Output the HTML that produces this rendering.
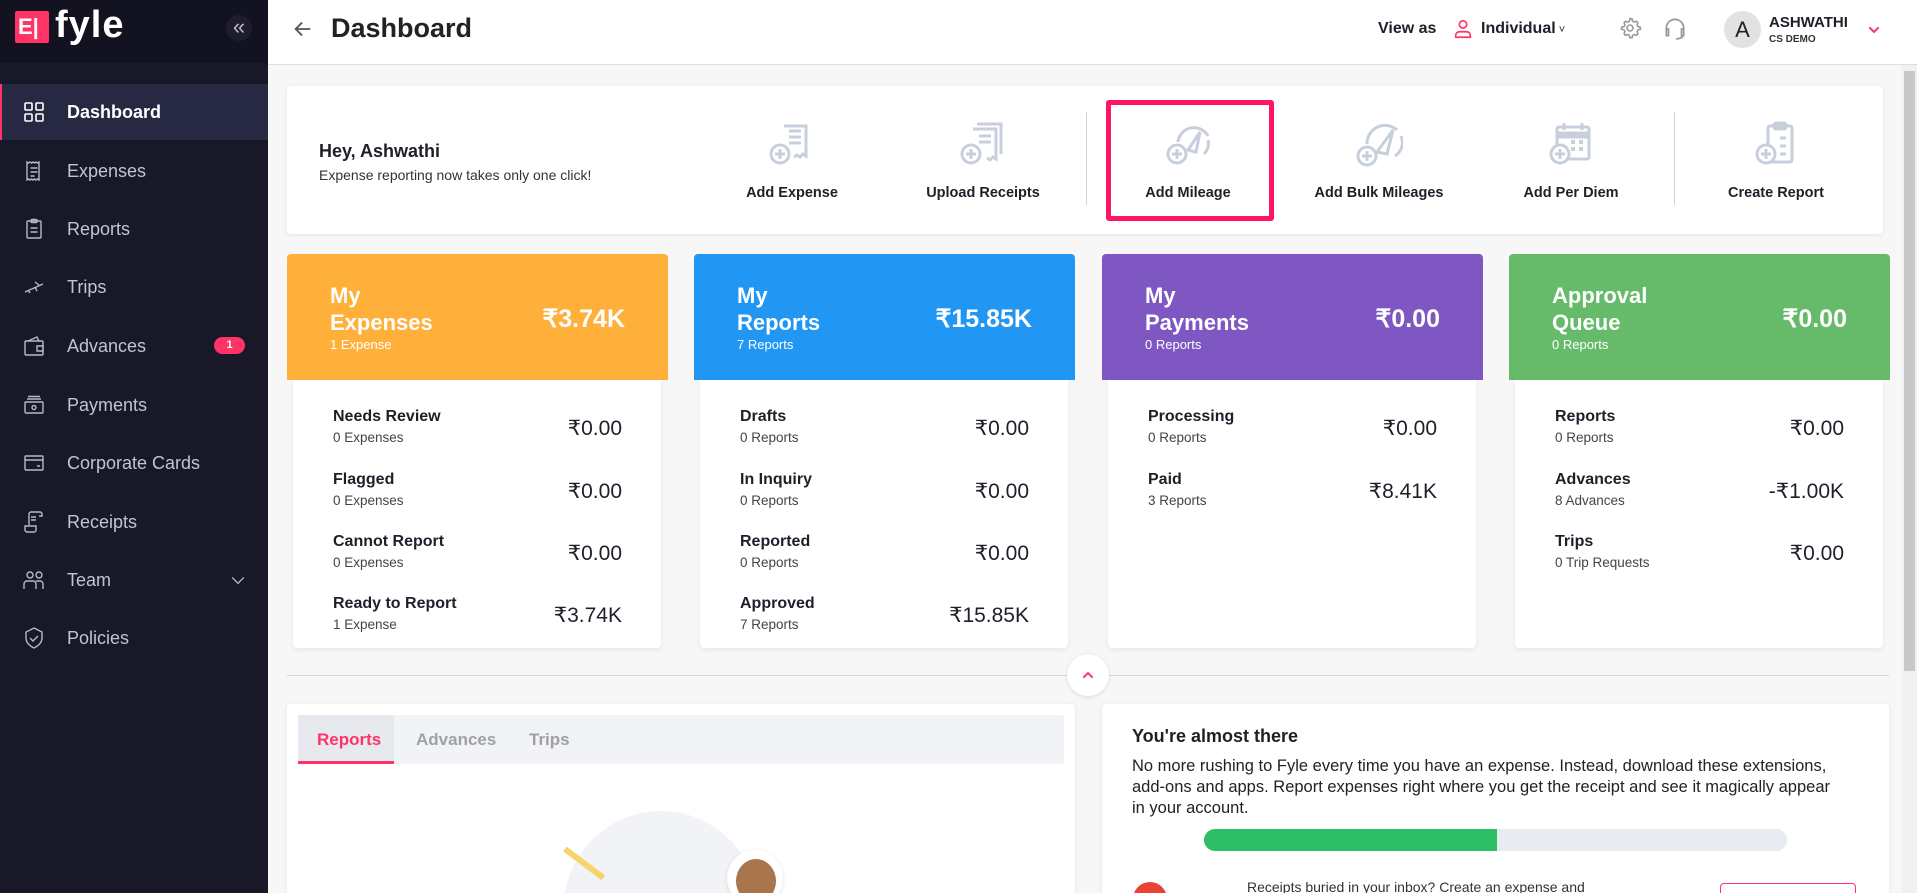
<!DOCTYPE html>
<html><head><meta charset="utf-8"><style>
*{box-sizing:border-box;margin:0;padding:0}
html,body{width:1917px;height:893px;overflow:hidden}
body{background:#f7f7f8;font-family:"Liberation Sans",sans-serif;position:relative;color:#1f1f2a}
.a{position:absolute}
#side{left:0;top:0;width:268px;height:893px;background:#181828}
#logo{left:0;top:0;width:268px;height:63px;background:#121220}
.nav{position:absolute;left:0;width:268px;height:58px;display:flex;align-items:center;color:#c3c4cd;font-size:18px}
.nav svg{position:absolute;left:22px;width:24px;height:24px}
.nav span{position:absolute;left:67px}
.act{background:#262941;color:#fff;font-weight:bold;border-left:2px solid #ff3366}
#hdr{left:268px;top:0;width:1649px;height:65px;background:#fff;border-bottom:1px solid #dedede}
.card{background:#fff;border-radius:4px;box-shadow:0 1px 6px rgba(0,0,0,.08)}
.act-it{position:absolute;top:120px;width:190px;margin-left:-95px;text-align:center}
.act-it svg{width:48px;height:48px;display:block;margin:0 auto}
.act-it div{font-size:14.5px;font-weight:bold;margin-top:17px;color:#1f1f2a}
.vd{position:absolute;top:112px;width:1px;height:93px;background:#ccd3e0}
.sh{position:absolute;top:254px;width:381px;height:126px;border-radius:4px 4px 0 0;color:#fff}
.sh .t{position:absolute;left:43px;top:28px;font-size:22px;font-weight:bold;line-height:27px}
.sh .s{position:absolute;left:43px;top:83px;font-size:13px}
.sh .v{position:absolute;right:43px;top:50px;font-size:25px;font-weight:bold}
.sb{position:absolute;top:380px;width:368px;height:268px;background:#fff;box-shadow:0 2px 6px rgba(0,0,0,.07);border-radius:0 0 4px 4px}
.row{position:absolute;left:40px;right:39px;height:50px}
.row b{display:block;font-size:16px}
.row i{font-style:normal;display:block;font-size:13.5px;color:#444;margin-top:4px}
.row em{position:absolute;right:0;top:8px;font-style:normal;font-size:21px}
</style></head><body>
<div id="side" class="a"></div>
<div id="logo" class="a"></div>
<div class="a" style="left:15px;top:11px;width:34px;height:32px;background:#ff3366;border-radius:2px"></div>
<div class="a" style="left:18px;top:14px;color:#fff;font-size:22px;font-weight:bold;line-height:26px">E|</div>
<div class="a" style="left:55px;top:2px;color:#fff;font-size:38px;font-weight:bold;letter-spacing:1px;line-height:46px">fyle</div>
<div class="a" style="left:226px;top:15px;width:26px;height:26px;border-radius:13px;background:#1d1d2e;color:#bbb;font-size:22px;line-height:24px;text-align:center">«</div>

<div class="nav act" style="top:84px;height:56px"><svg viewBox="0 0 24 24" fill="none" stroke="#fff" stroke-width="1.6" style="left:20px"><rect x="3" y="3" width="7" height="7" rx="1"/><rect x="14" y="3" width="7" height="7" rx="1"/><rect x="3" y="14" width="7" height="7" rx="1"/><rect x="14" y="14" width="7" height="7" rx="1"/></svg><span style="left:65px">Dashboard</span></div>
<div class="nav" style="top:142px"><svg viewBox="0 0 24 24" fill="none" stroke="#b8b9c4" stroke-width="1.4"><path d="M5 3l1.5 1 1.5-1 1.5 1 1.5-1 1.5 1 1.5-1 1.5 1 1.5-1v18l-1.5-1-1.5 1-1.5-1-1.5 1-1.5-1-1.5 1-1.5-1-1.5 1z"/><path d="M8.5 9h7M8.5 13h7M8.5 17h4"/></svg><span>Expenses</span></div>
<div class="nav" style="top:200px"><svg viewBox="0 0 24 24" fill="none" stroke="#b8b9c4" stroke-width="1.4"><rect x="5" y="4" width="14" height="17" rx="1"/><rect x="9" y="2.5" width="6" height="3" rx="1"/><path d="M8.5 11h7M8.5 15h7"/></svg><span>Reports</span></div>
<div class="nav" style="top:258px"><svg viewBox="0 0 24 24" fill="none" stroke="#b8b9c4" stroke-width="1.4"><path d="M3 17l18-8M6 15l2 3M13 12l2 4M17 10l-4-3"/></svg><span>Trips</span></div>
<div class="nav" style="top:317px"><svg viewBox="0 0 24 24" fill="none" stroke="#b8b9c4" stroke-width="1.4"><rect x="3" y="7" width="18" height="14" rx="1"/><path d="M6 7l9-4 2 4M15 12h6v5h-6z"/></svg><span>Advances</span><div class="a" style="left:214px;top:20px;width:31px;height:17px;border-radius:9px;background:#ff3366;color:#fff;font-size:11px;font-weight:bold;text-align:center;line-height:17px">1</div></div>
<div class="nav" style="top:376px"><svg viewBox="0 0 24 24" fill="none" stroke="#b8b9c4" stroke-width="1.4"><rect x="3" y="9" width="18" height="11" rx="1"/><path d="M5 6h14M6 3.5h12"/><circle cx="12" cy="14.5" r="2"/></svg><span>Payments</span></div>
<div class="nav" style="top:434px"><svg viewBox="0 0 24 24" fill="none" stroke="#b8b9c4" stroke-width="1.4"><rect x="3" y="5" width="18" height="14" rx="1"/><path d="M3 9h18M15 15h3"/></svg><span>Corporate Cards</span></div>
<div class="nav" style="top:493px"><svg viewBox="0 0 24 24" fill="none" stroke="#b8b9c4" stroke-width="1.4"><path d="M7 15V4a2 2 0 012-2h9a2 2 0 012 2v2h-3M9 7h5M9 10h5"/><path d="M3 16h11v4a2 2 0 01-2 2H5a2 2 0 01-2-2z"/></svg><span>Receipts</span></div>
<div class="nav" style="top:551px"><svg viewBox="0 0 24 24" fill="none" stroke="#b8b9c4" stroke-width="1.4"><circle cx="8" cy="7" r="3"/><circle cx="17" cy="7" r="3"/><path d="M2 21v-5a3 3 0 013-3h6a3 3 0 013 3v5M14 13h4a3 3 0 013 3v5"/></svg><span>Team</span><svg viewBox="0 0 24 24" fill="none" stroke="#b8b9c4" stroke-width="1.5" style="left:228px;width:20px"><path d="M5 9l7 7 7-7"/></svg></div>
<div class="nav" style="top:609px"><svg viewBox="0 0 24 24" fill="none" stroke="#b8b9c4" stroke-width="1.4"><path d="M12 2l8 4v6c0 5-4 8-8 10-4-2-8-5-8-10V6z"/><path d="M8 12l3 3 5-5"/></svg><span>Policies</span></div>

<div id="hdr" class="a"></div>
<svg class="a" style="left:292px;top:18px" width="22" height="22" viewBox="0 0 24 24" fill="none" stroke="#555" stroke-width="2"><path d="M20 12H4M11 5l-7 7 7 7"/></svg>
<div class="a" style="left:331px;top:13px;font-size:27px;font-weight:bold;color:#222">Dashboard</div>
<div class="a" style="left:1378px;top:20px;font-size:16px;font-weight:bold">View as</div>
<svg class="a" style="left:1452px;top:18px" width="22" height="22" viewBox="0 0 24 24" fill="none" stroke="#ff3366" stroke-width="1.8"><circle cx="12" cy="7" r="4"/><path d="M4 21v-2a4 4 0 014-4h8a4 4 0 014 4v2z"/></svg>
<div class="a" style="left:1481px;top:20px;font-size:16px;font-weight:bold">Individual<span style="font-size:11px;font-weight:normal"> ˅</span></div>
<svg class="a" style="left:1618px;top:16px" width="24" height="24" viewBox="0 0 24 24" fill="none" stroke="#999" stroke-width="1.6"><circle cx="12" cy="12" r="3"/><path d="M12 2.5l2 .3.6 2.4 1.6.9 2.3-.8 1.4 1.5-.8 2.3.9 1.6 2.4.6v2l-2.4.6-.9 1.6.8 2.3-1.4 1.5-2.3-.8-1.6.9-.6 2.4h-2l-.6-2.4-1.6-.9-2.3.8-1.4-1.5.8-2.3-.9-1.6-2.4-.6v-2l2.4-.6.9-1.6-.8-2.3 1.4-1.5 2.3.8 1.6-.9.6-2.4z"/></svg>
<svg class="a" style="left:1662px;top:15px" width="26" height="26" viewBox="0 0 24 24" fill="none" stroke="#999" stroke-width="1.6"><path d="M4 16v-4a8 8 0 0116 0v4M4 13h2v6H4zM18 13h2v6h-2zM19 19c0 2-3 3-6 3"/></svg>
<div class="a" style="left:1724px;top:11px;width:37px;height:37px;border-radius:50%;background:#e2e2e2;color:#222;font-size:22px;text-align:center;line-height:37px">A</div>
<div class="a" style="left:1769px;top:14px;font-size:15px;font-weight:bold">ASHWATHI</div>
<div class="a" style="left:1769px;top:34px;font-size:10px;font-weight:bold;color:#333">CS DEMO</div>
<svg class="a" style="left:1866px;top:22px" width="16" height="16" viewBox="0 0 24 24" fill="none" stroke="#ff3366" stroke-width="3"><path d="M5 8l7 7 7-7"/></svg>

<div class="a" style="left:1902px;top:65px;width:15px;height:828px;background:#f0f0f0"></div>
<div class="a" style="left:1904px;top:71px;width:11px;height:600px;background:#c8c8c8"></div>

<div class="a card" style="left:287px;top:86px;width:1596px;height:148px"></div>
<div class="a" style="left:319px;top:141px;font-size:18px;font-weight:bold">Hey, Ashwathi</div>
<div class="a" style="left:319px;top:167px;font-size:14px;color:#333">Expense reporting now takes only one click!</div>
<div class="vd" style="left:1086px"></div><div class="vd" style="left:1674px"></div>
<div class="a" style="left:1106px;top:100px;width:168px;height:121px;border:5px solid #ff1561;border-radius:3px"></div>
<div class="act-it" style="left:792px"><svg viewBox="0 0 48 48" fill="none" stroke="#c8cfdc" stroke-width="3"><path d="M16 6h22v30l-3-2-3 3-3-2-3 2"/><path d="M21 11h12M21 17h12M21 23h12"/><circle cx="12" cy="34" r="9"/><path d="M12 29v10M7 34h10"/></svg><div>Add Expense</div></div>
<div class="act-it" style="left:983px"><svg viewBox="0 0 48 48" fill="none" stroke="#c8cfdc" stroke-width="3"><path d="M18 4h24v30M14 9h23v30l-3-2-3 3-3-2"/><path d="M20 16h12M20 22h12"/><circle cx="12" cy="34" r="9"/><path d="M12 29v10M7 34h10"/></svg><div>Upload Receipts</div></div>
<div class="act-it" style="left:1188px"><svg viewBox="0 0 48 48" fill="none" stroke="#c8cfdc" stroke-width="3"><path d="M14 22a16 16 0 0130-6M44 20a16 16 0 01-4 14"/><path d="M24 30l12-18-4 20z"/><circle cx="13" cy="34" r="9"/><path d="M13 29v10M8 34h10"/></svg><div>Add Mileage</div></div>
<div class="act-it" style="left:1379px"><svg viewBox="0 0 48 48" fill="none" stroke="#c8cfdc" stroke-width="3"><path d="M12 24a18 18 0 0130-14M46 16a16 16 0 01-6 20"/><path d="M22 32l16-22-6 24z"/><circle cx="12" cy="36" r="9"/><path d="M12 31v10M7 36h10"/></svg><div>Add Bulk Mileages</div></div>
<div class="act-it" style="left:1571px"><svg viewBox="0 0 48 48" fill="none" stroke="#c8cfdc" stroke-width="3"><rect x="10" y="7" width="32" height="32" rx="2"/><path d="M10 15h32" stroke-width="7"/><path d="M17 3v7M35 3v7"/><path d="M24 22h4M32 22h4M24 29h4M32 29h4" stroke-width="4"/><circle cx="13" cy="34" r="9" fill="#fff"/><path d="M13 29v10M8 34h10"/></svg><div>Add Per Diem</div></div>
<div class="act-it" style="left:1776px"><svg viewBox="0 0 48 48" fill="none" stroke="#c8cfdc" stroke-width="3"><rect x="16" y="6" width="24" height="36" rx="2"/><rect x="22" y="3" width="12" height="6" rx="2"/><path d="M28 18h6M28 26h6M28 34h6"/><circle cx="14" cy="34" r="9" fill="#fff"/><path d="M14 29v10M9 34h10"/></svg><div>Create Report</div></div>

<div class="sh" style="left:287px;background:#ffb03b"><div class="t">My<br>Expenses</div><div class="s">1 Expense</div><div class="v">₹3.74K</div></div>
<div class="sh" style="left:694px;background:#2196f3"><div class="t">My<br>Reports</div><div class="s">7 Reports</div><div class="v">₹15.85K</div></div>
<div class="sh" style="left:1102px;background:#7e57c2"><div class="t">My<br>Payments</div><div class="s">0 Reports</div><div class="v">₹0.00</div></div>
<div class="sh" style="left:1509px;background:#66bb6a"><div class="t">Approval<br>Queue</div><div class="s">0 Reports</div><div class="v">₹0.00</div></div>

<div class="sb" style="left:293px">
<div class="row" style="top:28px"><b>Needs Review</b><i>0 Expenses</i><em>₹0.00</em></div>
<div class="row" style="top:91px"><b>Flagged</b><i>0 Expenses</i><em>₹0.00</em></div>
<div class="row" style="top:153px"><b>Cannot Report</b><i>0 Expenses</i><em>₹0.00</em></div>
<div class="row" style="top:215px"><b>Ready to Report</b><i>1 Expense</i><em>₹3.74K</em></div>
</div>
<div class="sb" style="left:700px">
<div class="row" style="top:28px"><b>Drafts</b><i>0 Reports</i><em>₹0.00</em></div>
<div class="row" style="top:91px"><b>In Inquiry</b><i>0 Reports</i><em>₹0.00</em></div>
<div class="row" style="top:153px"><b>Reported</b><i>0 Reports</i><em>₹0.00</em></div>
<div class="row" style="top:215px"><b>Approved</b><i>7 Reports</i><em>₹15.85K</em></div>
</div>
<div class="sb" style="left:1108px">
<div class="row" style="top:28px"><b>Processing</b><i>0 Reports</i><em>₹0.00</em></div>
<div class="row" style="top:91px"><b>Paid</b><i>3 Reports</i><em>₹8.41K</em></div>
</div>
<div class="sb" style="left:1515px">
<div class="row" style="top:28px"><b>Reports</b><i>0 Reports</i><em>₹0.00</em></div>
<div class="row" style="top:91px"><b>Advances</b><i>8 Advances</i><em>-₹1.00K</em></div>
<div class="row" style="top:153px"><b>Trips</b><i>0 Trip Requests</i><em>₹0.00</em></div>
</div>

<div class="a" style="left:287px;top:675px;width:1602px;height:1px;background:#d6d6de"></div>
<div class="a" style="left:1067px;top:654px;width:42px;height:42px;border-radius:50%;background:#fff;box-shadow:0 1px 4px rgba(0,0,0,.12)"></div>
<svg class="a" style="left:1080px;top:667px" width="16" height="16" viewBox="0 0 24 24" fill="none" stroke="#ff3366" stroke-width="3"><path d="M5 16l7-7 7 7"/></svg>

<div class="a card" style="left:287px;top:704px;width:788px;height:189px;overflow:hidden;border-radius:4px 4px 0 0">
<div class="a" style="left:11px;top:11px;width:766px;height:49px;background:#f2f3f7;border-radius:3px"></div>
<div class="a" style="left:11px;top:11px;width:96px;height:49px;background:#e8e9ee;border-bottom:3px solid #ff3366"></div>
<div class="a" style="left:30px;top:26px;font-size:17px;font-weight:bold;color:#ff3366">Reports</div>
<div class="a" style="left:129px;top:26px;font-size:17px;font-weight:bold;color:#a0a0a8">Advances</div>
<div class="a" style="left:242px;top:26px;font-size:17px;font-weight:bold;color:#a0a0a8">Trips</div>
<div class="a" style="left:276px;top:107px;width:196px;height:200px;border-radius:50%;background:#f2f3f7"></div>
<div class="a" style="left:278px;top:142px;width:48px;height:6px;background:#f6d36b;transform:rotate(37deg);transform-origin:left"></div>
<div class="a" style="left:440px;top:146px;width:56px;height:56px;border-radius:50%;background:#fff;box-shadow:0 1px 4px rgba(0,0,0,.12)"></div>
<div class="a" style="left:449px;top:155px;width:40px;height:44px;border-radius:50%;background:#a8754c"></div>
</div>

<div class="a card" style="left:1102px;top:704px;width:787px;height:189px;overflow:hidden;border-radius:4px 4px 0 0">
<div class="a" style="left:30px;top:22px;font-size:18px;font-weight:bold">You're almost there</div>
<div class="a" style="left:30px;top:52px;width:705px;font-size:16.5px;line-height:21px;color:#222">No more rushing to Fyle every time you have an expense. Instead, download these extensions, add-ons and apps. Report expenses right where you get the receipt and see it magically appear in your account.</div>
<div class="a" style="left:102px;top:125px;width:583px;height:22px;border-radius:11px;background:#e8ebf0;overflow:hidden"><div style="width:293px;height:22px;background:#2ebf66"></div></div>
<div class="a" style="left:31px;top:178px;width:34px;height:34px;border-radius:50%;background:#ea4335"></div>
<div class="a" style="left:145px;top:175px;font-size:14px;color:#333">Receipts buried in your inbox? Create an expense and</div>
<div class="a" style="left:618px;top:179px;width:136px;height:40px;border:1.5px solid #ff3366;border-radius:4px"></div>
</div>
</body></html>
